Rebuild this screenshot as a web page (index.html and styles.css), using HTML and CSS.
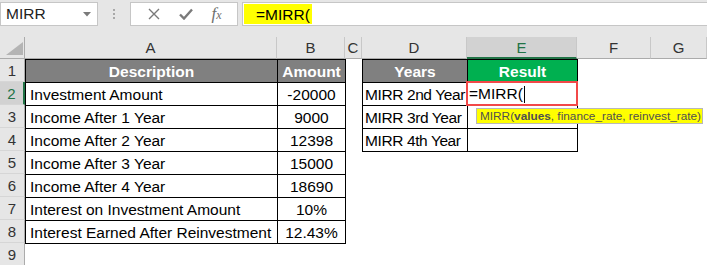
FILE: index.html
```html
<!DOCTYPE html>
<html lang="en">
<head>
  <meta charset="UTF-8">
  <title>MIRR</title>
  <link rel="stylesheet" href="styles.css">
</head>
<body>
  <div class="toolbar">
    <div class="name-box">
      <span>MIRR</span>
      <svg class="drop" width="8" height="5" viewBox="0 0 8 5"><path d="M0 0H8L4 4.5Z" fill="#7a7a7a"/></svg>
    </div>
    <div class="grip"><i></i><i></i><i></i></div>
    <div class="fx-buttons">
      <svg width="12" height="12" viewBox="0 0 12 12"><path d="M1 1L11 11M11 1L1 11" stroke="#7a7a7a" stroke-width="1.4" fill="none"/></svg>
      <svg width="14" height="12" viewBox="0 0 14 12"><path d="M1 6.5L5 10.5L13 1.5" stroke="#7a7a7a" stroke-width="2.4" fill="none"/></svg>
      <span class="fx">f<small>x</small></span>
    </div>
    <div class="formula">
      <span class="hl">=MIRR(</span>
    </div>
  </div>

  <div class="sheet">
    <div class="hd corner"><svg width="17" height="13" viewBox="0 0 17 13"><path d="M17 0V13H0Z" fill="#b4b4b4"/></svg></div>
    <div class="hd">A</div>
    <div class="hd">B</div>
    <div class="hd">C</div>
    <div class="hd">D</div>
    <div class="hd sel">E</div>
    <div class="hd">F</div>
    <div class="hd">G</div>

    <div class="rn">1</div>
    <div class="bx th">Description</div>
    <div class="bx th">Amount</div>
    <div></div>
    <div class="bx th">Years</div>
    <div class="bx th green">Result</div>
    <div></div>
    <div></div>

    <div class="rn sel">2</div>
    <div class="bx">Investment Amount</div>
    <div class="bx num">-20000</div>
    <div></div>
    <div class="bx year">MIRR 2nd Year</div>
    <div class="bx active">=MIRR(<span class="caret"></span></div>
    <div></div>
    <div></div>

    <div class="rn">3</div>
    <div class="bx">Income After 1 Year</div>
    <div class="bx num">9000</div>
    <div></div>
    <div class="bx year">MIRR 3rd Year</div>
    <div class="bx"></div>
    <div></div>
    <div></div>

    <div class="rn">4</div>
    <div class="bx">Income After 2 Year</div>
    <div class="bx num">12398</div>
    <div></div>
    <div class="bx year">MIRR 4th Year</div>
    <div class="bx"></div>
    <div></div>
    <div></div>

    <div class="rn">5</div>
    <div class="bx">Income After 3 Year</div>
    <div class="bx num">15000</div>
    <div></div><div></div><div></div><div></div><div></div>

    <div class="rn">6</div>
    <div class="bx">Income After 4 Year</div>
    <div class="bx num">18690</div>
    <div></div><div></div><div></div><div></div><div></div>

    <div class="rn">7</div>
    <div class="bx">Interest on Investment Amount</div>
    <div class="bx num">10%</div>
    <div></div><div></div><div></div><div></div><div></div>

    <div class="rn">8</div>
    <div class="bx">Interest Earned After Reinvestment</div>
    <div class="bx num">12.43%</div>
    <div></div><div></div><div></div><div></div><div></div>

    <div class="rn">9</div>
    <div></div><div></div><div></div><div></div><div></div><div></div><div></div>
  </div>

  <div class="tip">MIRR(<b>values</b>, finance_rate, reinvest_rate)</div>
</body>
</html>
```

FILE: styles.css
```css
body {
  margin: 0;
  background-color: #e6e6e6;
  font-family: 'Liberation Sans', Arial, sans-serif;
  color: #000;
  position: relative;
  overflow: hidden;
}

.toolbar {
  display: flex;
  height: 24px;
  padding: 2px 0 11px;
}

.name-box {
  width: 98px;
  box-sizing: border-box;
  background-color: #fff;
  border: 1px solid #c6c6c6;
  display: flex;
  align-items: center;
  justify-content: space-between;
  padding: 0 6px 0 5px;
  font-size: 15.5px;
  color: #222;
}

.grip {
  width: 32px;
  display: flex;
  flex-direction: column;
  align-items: center;
  justify-content: center;
  gap: 2px;
}

.grip i {
  width: 2px;
  height: 2px;
  background-color: #a8a8a8;
}

.fx-buttons {
  width: 108px;
  box-sizing: border-box;
  background-color: #fff;
  border: 1px solid #c6c6c6;
  display: flex;
  align-items: center;
  justify-content: space-around;
  padding: 0 6px 0 8px;
}

.fx {
  font-family: 'Liberation Serif', serif;
  font-style: italic;
  font-size: 17px;
  color: #6e6e6e;
}

.fx small {
  font-size: 12px;
}

.formula {
  flex: 1;
  margin-left: 4px;
  background-color: #fff;
  border: 1px solid #c6c6c6;
  border-right: none;
  padding: 1px 0 1px 1px;
  display: flex;
}

.formula .hl {
  background-color: #ffff00;
  width: 56px;
  padding-left: 12px;
  font-size: 15.5px;
  line-height: 21px;
}

.sheet {
  display: grid;
  grid-template-columns: 25px 252px 68px 17px 105px 110px 74px 56px;
  grid-template-rows: 22px repeat(9, 23px);
  background-color: #fff;
  font-size: 15.5px;
}

.sheet > div {
  display: flex;
  align-items: center;
  white-space: nowrap;
  min-width: 0;
}

.hd {
  background-color: #e6e6e6;
  border-right: 1px solid #c8c8c8;
  border-bottom: 1px solid #ababab;
  justify-content: center;
  color: #333;
  font-size: 15px;
}

.hd.corner {
  align-items: flex-end;
  justify-content: flex-end;
  padding: 0 1px 3px 0;
  border-right-color: #ababab;
}

.hd.sel {
  background-color: #d2d2d2;
  color: #217346;
  border-bottom: 2px solid #217346;
}

.rn {
  background-color: #e6e6e6;
  border-right: 1px solid #ababab;
  border-bottom: 1px solid #d6d6d6;
  justify-content: center;
  color: #333;
  font-size: 15px;
}

.rn.sel {
  background-color: #d2d2d2;
  color: #217346;
  border-right: 2px solid #217346;
}

.sheet > .bx {
  border: 1px solid #000;
  margin: 0 -1px -1px 0;
  padding: 1px 0 0 4px;
  overflow: visible;
  position: relative;
}

.sheet > .year {
  padding-left: 2px;
  letter-spacing: -0.4px;
}

.sheet > .th {
  background-color: #808080;
  color: #fff;
  font-weight: bold;
  justify-content: center;
  padding-left: 0;
}

.sheet > .green {
  background-color: #00b050;
}

.sheet > .num {
  justify-content: center;
  padding-left: 0;
}

.sheet > .active {
  border: 2px solid #f24848;
  margin: -1px -1px -1px -1px;
  padding-left: 1px;
  z-index: 1;
}

.caret {
  width: 1px;
  height: 17px;
  background-color: #000;
  margin-left: 1px;
}

.tip {
  position: absolute;
  left: 476px;
  top: 108px;
  width: 227px;
  height: 16px;
  box-sizing: border-box;
  background-color: #ffff00;
  border: 1px solid #b8b8b8;
  font-size: 11.8px;
  line-height: 14px;
  padding-left: 3px;
  color: #505050;
  white-space: nowrap;
}
```
